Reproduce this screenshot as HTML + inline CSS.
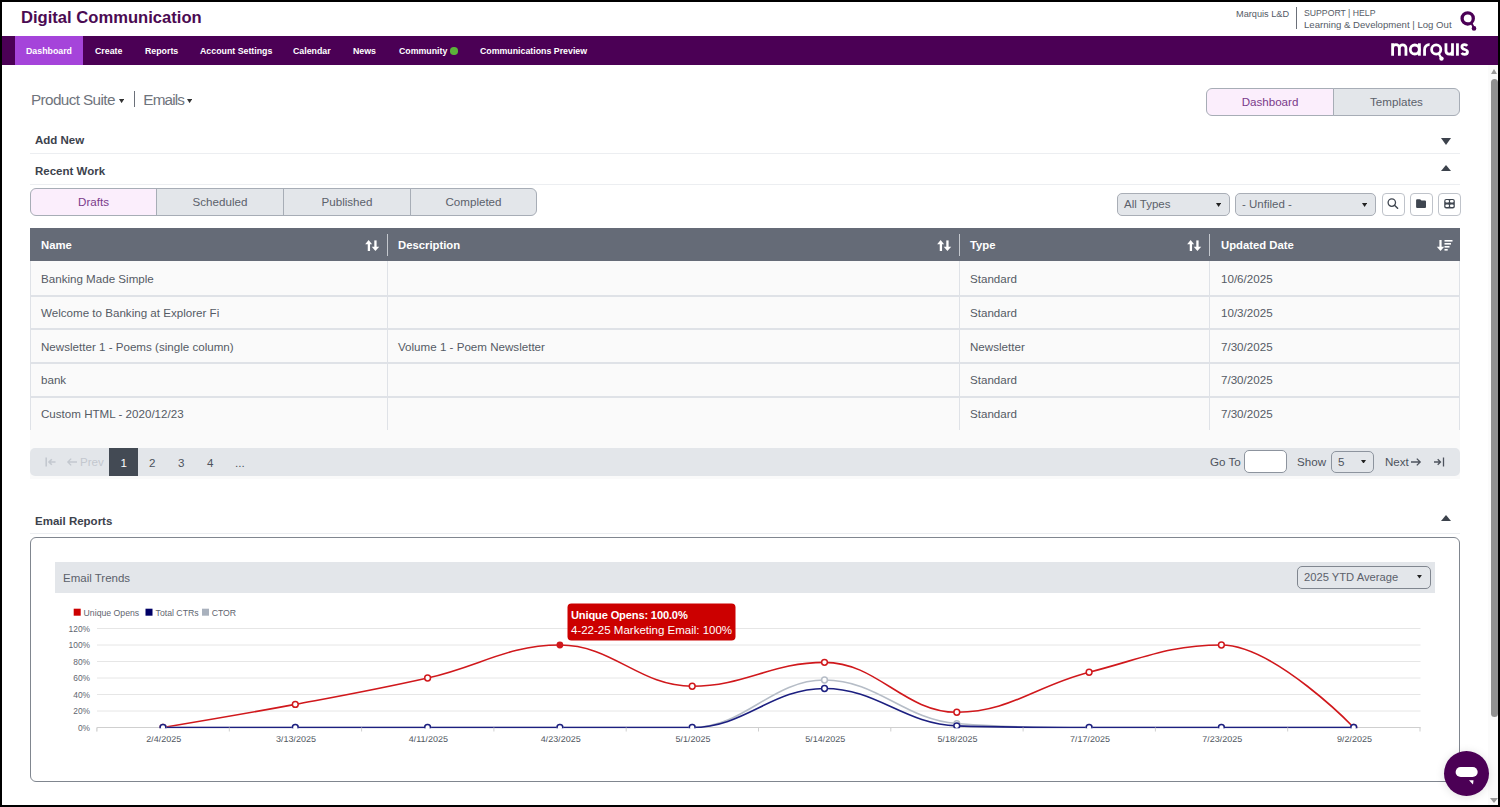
<!DOCTYPE html>
<html><head><meta charset="utf-8">
<style>
*{box-sizing:border-box;margin:0;padding:0}
html,body{width:1500px;height:807px;overflow:hidden;background:#fff}
body{font-family:"Liberation Sans",sans-serif;position:relative}
.a{position:absolute;white-space:nowrap}
.title{left:21px;top:8px;font-size:16.6px;font-weight:bold;color:#4b0a52}
.tr{font-size:9.2px;color:#555b66}
#nav{left:0;top:36px;width:1500px;height:29px;background:#4b0055}
.nv{top:0;height:29px;line-height:30.6px;font-size:8.8px;font-weight:bold;color:#fff}
.nv.act{background:#a544da}
.secttl{font-size:11.5px;font-weight:bold;color:#3c424c}
.hr{height:1px;background:#eceef1}
.tog{border:1px solid #a7adb6;height:28px;font-size:11.6px;line-height:25px;text-align:center;color:#5b616b;background:#e3e6ea}
.tog.on{background:#fbeefc;color:#7a3a8a}
.sel{border:1.8px solid #a9aeb6;border-radius:5px;background:#e3e6ea;font-size:11.5px;color:#5b616b;padding-left:6px}
.caret{position:absolute;width:0;height:0;border-left:2.6px solid transparent;border-right:2.6px solid transparent;border-top:3.6px solid #111}
.ib{border:1.8px solid #bfc3ca;border-radius:4px;background:#fff;width:23px;height:23px}
.th{top:228.8px;height:33px;line-height:33px;font-size:11.3px;font-weight:bold;color:#fff}
.tsep{top:234px;width:1px;height:22px;background:#c4c8ce}
.td{font-size:11.6px;color:#555b65;line-height:14px}
.pg{font-size:11.6px;color:#4d535d;line-height:14px}
</style></head>
<body>
  <!-- header -->
  <div class="a title">Digital Communication</div>
  <div class="a tr" style="left:1236px;top:9px">Marquis L&amp;D</div>
  <div class="a" style="left:1296px;top:7px;width:1px;height:22px;background:#6b7079"></div>
  <div class="a tr" style="left:1304px;top:8px;font-size:8.7px">SUPPORT | HELP</div>
  <div class="a tr" style="left:1304px;top:19px;font-size:9.6px">Learning &amp; Development | Log Out</div>
  <svg class="a" style="left:1456px;top:8px" width="24" height="24" viewBox="0 0 24 24"><circle cx="11.7" cy="10.4" r="5.6" fill="none" stroke="#4b0055" stroke-width="3.3"/><line x1="15.2" y1="14.6" x2="18" y2="20" stroke="#4b0055" stroke-width="2"/><circle cx="18" cy="20.4" r="2.3" fill="#4b0055"/></svg>

  <div id="nav" class="a">
    <div class="a nv act" style="left:15px;width:68px;text-align:center">Dashboard</div>
    <div class="a nv" style="left:95px">Create</div>
    <div class="a nv" style="left:145px">Reports</div>
    <div class="a nv" style="left:200px">Account Settings</div>
    <div class="a nv" style="left:293px">Calendar</div>
    <div class="a nv" style="left:353px">News</div>
    <div class="a nv" style="left:399px">Community</div>
    <div class="a" style="left:450px;top:11px;width:7.5px;height:7.5px;border-radius:50%;background:#5bb33a"></div>
    <div class="a nv" style="left:480px">Communications Preview</div>
    <svg class="a" style="left:1388px;top:2px" width="84" height="26" viewBox="1388 38 84 26"><g fill="none" stroke="#fff" stroke-width="2.8">
      <path d="M1392.6 43.3V55.7M1392.6 48.07A3.37 3.37 0 0 1 1399.35 48.07V55.7M1399.35 48.07A3.3 3.3 0 0 1 1405.95 48.07V55.7"/>
      <circle cx="1414.8" cy="49.5" r="4.5"/><path d="M1419.4 43.3V55.7"/>
      <path d="M1424.55 55.7V49.6A4.6 4.6 0 0 1 1429.6 44.7"/>
      <circle cx="1436.2" cy="49.55" r="4.6"/>
      <path d="M1445.95 43.3V51A3.28 3.28 0 0 0 1452.5 51V43.3M1452.5 50V55.7"/>
      <path d="M1457.45 43.3V55.7"/>
      <path d="M1467.2 45.9C1466.5 45 1465.5 44.7 1464.6 44.7C1463 44.7 1461.9 45.6 1461.9 47C1461.9 48.4 1463 49 1464.7 49.5C1466.5 50 1467.5 50.7 1467.5 52.1C1467.5 53.5 1466.3 54.3 1464.6 54.3C1463.4 54.3 1462.3 53.9 1461.6 53"/>
      </g><path d="M1438.8 53.8L1441.5 58.6" stroke="#fff" stroke-width="2.2"/><circle cx="1441.5" cy="58.6" r="2.2" fill="#fff"/></svg>
  </div>

  <!-- scrollbar -->
  <div class="a" style="left:1488px;top:65px;width:10px;height:740px;background:#fbfbfb"></div>
  <div class="a" style="left:1490.5px;top:69.3px;width:0;height:0;border-left:3.5px solid transparent;border-right:3.5px solid transparent;border-bottom:5px solid #9a9a9a"></div>
  <div class="a" style="left:1491px;top:79px;width:7px;height:638px;border-radius:3.5px;background:#919191"></div>
  <div class="a" style="left:1490px;top:798px;width:0;height:0;border-left:4px solid transparent;border-right:4px solid transparent;border-top:5px solid #9a9a9a"></div>

  <!-- breadcrumb -->
  <div class="a" style="left:31px;top:91px;font-size:15.3px;color:#6f747c;letter-spacing:-0.62px">Product Suite</div>
  <svg class="a" style="left:118.6px;top:98.7px" width="5.2" height="4.2" viewBox="0 0 5.2 4.2"><path d="M0 0H5.2L2.6 4.2z" fill="#333"/></svg>
  <div class="a" style="left:134px;top:90.7px;width:1px;height:16px;background:#6b7079"></div>
  <div class="a" style="left:143.3px;top:91px;font-size:15.3px;color:#6f747c;letter-spacing:-0.85px">Emails</div>
  <svg class="a" style="left:186.8px;top:98.7px" width="5.2" height="4.2" viewBox="0 0 5.2 4.2"><path d="M0 0H5.2L2.6 4.2z" fill="#333"/></svg>

  <!-- toggle -->
  <div class="a tog on" style="left:1206px;top:88px;width:128px;border-radius:6px 0 0 6px">Dashboard</div>
  <div class="a tog" style="left:1333px;top:88px;width:127px;border-radius:0 6px 6px 0">Templates</div>

  <!-- sections -->
  <div class="a secttl" style="left:35px;top:134px">Add New</div>
  <div class="a" style="left:1441px;top:137.5px;width:0;height:0;border-left:5.5px solid transparent;border-right:5.5px solid transparent;border-bottom:0;border-top:7px solid #3c424c"></div>
  <div class="a hr" style="left:30px;top:153px;width:1430px"></div>
  <div class="a secttl" style="left:35px;top:164.5px">Recent Work</div>
  <div class="a" style="left:1441px;top:165px;width:0;height:0;border-left:5.5px solid transparent;border-right:5.5px solid transparent;border-bottom:6.5px solid #3c424c"></div>
  <div class="a hr" style="left:30px;top:184px;width:1430px"></div>

  <!-- tabs -->
  <div class="a tog on" style="left:30px;top:188px;width:127px;border-radius:6px 0 0 6px">Drafts</div>
  <div class="a tog" style="left:156px;top:188px;width:128px;border-radius:0">Scheduled</div>
  <div class="a tog" style="left:283px;top:188px;width:128px;border-radius:0">Published</div>
  <div class="a tog" style="left:410px;top:188px;width:127px;border-radius:0 6px 6px 0">Completed</div>

  <!-- filters -->
  <div class="a sel" style="left:1117px;top:193px;width:113px;height:23px;line-height:21px">All Types</div>
  <svg class="a" style="left:1216px;top:202.6px" width="5.2" height="4" viewBox="0 0 5.2 4"><path d="M0 0H5.2L2.6 4z" fill="#222"/></svg>
  <div class="a sel" style="left:1235px;top:193px;width:141px;height:23px;line-height:21px">- Unfiled -</div>
  <svg class="a" style="left:1362.2px;top:202.6px" width="5.2" height="4" viewBox="0 0 5.2 4"><path d="M0 0H5.2L2.6 4z" fill="#222"/></svg>
  <div class="a ib" style="left:1382px;top:193px"></div>
  <div class="a ib" style="left:1410px;top:193px"></div>
  <div class="a ib" style="left:1438px;top:193px"></div>

  <!-- table -->
  <div class="a" style="left:30px;top:228px;width:1430px;height:33px;background:#656b77"></div>
  <div class="a th" style="left:41px">Name</div>
  <div class="a tsep" style="left:387px"></div>
  <div class="a th" style="left:398px">Description</div>
  <div class="a tsep" style="left:959px"></div>
  <div class="a th" style="left:970px">Type</div>
  <div class="a tsep" style="left:1209px"></div>
  <div class="a th" style="left:1221px">Updated Date</div>
  <div class="a" style="left:30px;top:261px;width:1430px;height:170px;background:#fafafa;border-left:1px solid #dfe2e7;border-right:1px solid #dfe2e7"></div>
  <div class="a td" style="left:41px;top:272.0px">Banking Made Simple</div>
  <div class="a td" style="left:970px;top:272.0px">Standard</div>
  <div class="a td" style="left:1221px;top:272.0px">10/6/2025</div>
  <div class="a" style="left:30px;top:295px;width:1430px;height:1.5px;background:#dfe2e7"></div>
  <div class="a td" style="left:41px;top:306.2px">Welcome to Banking at Explorer Fi</div>
  <div class="a td" style="left:970px;top:306.2px">Standard</div>
  <div class="a td" style="left:1221px;top:306.2px">10/3/2025</div>
  <div class="a" style="left:30px;top:328px;width:1430px;height:1.5px;background:#dfe2e7"></div>
  <div class="a td" style="left:41px;top:339.8px">Newsletter 1 - Poems (single column)</div>
  <div class="a td" style="left:398px;top:339.8px">Volume 1 - Poem Newsletter</div>
  <div class="a td" style="left:970px;top:339.8px">Newsletter</div>
  <div class="a td" style="left:1221px;top:339.8px">7/30/2025</div>
  <div class="a" style="left:30px;top:362px;width:1430px;height:1.5px;background:#dfe2e7"></div>
  <div class="a td" style="left:41px;top:373.2px">bank</div>
  <div class="a td" style="left:970px;top:373.2px">Standard</div>
  <div class="a td" style="left:1221px;top:373.2px">7/30/2025</div>
  <div class="a" style="left:30px;top:396px;width:1430px;height:1.5px;background:#dfe2e7"></div>
  <div class="a td" style="left:41px;top:406.8px">Custom HTML - 2020/12/23</div>
  <div class="a td" style="left:970px;top:406.8px">Standard</div>
  <div class="a td" style="left:1221px;top:406.8px">7/30/2025</div>
  <div class="a" style="left:30px;top:429.5px;width:1430px;height:1.5px;background:#dfe2e7"></div>
  <div class="a" style="left:387px;top:261px;width:1px;height:169px;background:#dfe2e7"></div>
  <div class="a" style="left:959px;top:261px;width:1px;height:169px;background:#dfe2e7"></div>
  <div class="a" style="left:1209px;top:261px;width:1px;height:169px;background:#dfe2e7"></div>
    <!-- sort icons -->
  <svg class="a" style="left:363px;top:238px" width="18" height="15" viewBox="0 0 18 15"><g fill="#fff"><path d="M2.2 6.3L5.65 1.9L9.1 6.3z"/><rect x="4.75" y="5" width="2.3" height="8"/><rect x="11.3" y="2.4" width="2.3" height="8"/><path d="M8.7 8.7L12.45 13L16.2 8.7z"/></g></svg>
  <svg class="a" style="left:935px;top:238px" width="18" height="15" viewBox="0 0 18 15"><g fill="#fff"><path d="M2.2 6.3L5.65 1.9L9.1 6.3z"/><rect x="4.75" y="5" width="2.3" height="8"/><rect x="11.3" y="2.4" width="2.3" height="8"/><path d="M8.7 8.7L12.45 13L16.2 8.7z"/></g></svg>
  <svg class="a" style="left:1185px;top:238px" width="18" height="15" viewBox="0 0 18 15"><g fill="#fff"><path d="M2.2 6.3L5.65 1.9L9.1 6.3z"/><rect x="4.75" y="5" width="2.3" height="8"/><rect x="11.3" y="2.4" width="2.3" height="8"/><path d="M8.7 8.7L12.45 13L16.2 8.7z"/></g></svg>
  <svg class="a" style="left:1435px;top:238px" width="20" height="15" viewBox="0 0 20 15"><g fill="#fff"><rect x="4.4" y="2" width="2.2" height="8"/><path d="M1.8 8.7L5.5 13L9.2 8.7z"/></g><g fill="#fff"><rect x="9.5" y="2" width="8" height="1.6"/><rect x="9.5" y="5" width="6.5" height="1.6"/><rect x="9.5" y="8" width="5" height="1.6"/><rect x="9.5" y="11" width="3.2" height="1.6"/></g></svg>

  <!-- filter icon contents -->
  <svg class="a" style="left:1382px;top:193px" width="23" height="23" viewBox="1382 193 23 23"><circle cx="1391.8" cy="202.6" r="3.7" fill="none" stroke="#3f4650" stroke-width="1.3"/><line x1="1394.5" y1="205.3" x2="1397.6" y2="208.2" stroke="#3f4650" stroke-width="1.5" stroke-linecap="round"/></svg>
  <svg class="a" style="left:1410px;top:193px" width="23" height="23" viewBox="1410 193 23 23"><path d="M1417.1 199.2h2.6q0.7 0 1.1 0.5l0.6 0.7h3.6q1 0 1 1v5.7q0 1-1 1h-7.9q-1 0-1-1v-6.9q0-1 1-1z" fill="#3f4650"/></svg>
  <svg class="a" style="left:1438px;top:193px" width="23" height="23" viewBox="1438 193 23 23"><rect x="1444.2" y="198.9" width="10.6" height="9.5" rx="2" fill="#3f4650"/><g fill="#fff"><rect x="1445.4" y="200.1" width="3.6" height="2.5" rx="1"/><rect x="1450" y="200.1" width="3.6" height="2.5" rx="1"/><rect x="1445.4" y="204.6" width="3.6" height="2.5" rx="1"/><rect x="1450" y="204.6" width="3.6" height="2.5" rx="1"/></g></svg>

  <!-- pagination -->
  <div class="a" style="left:30px;top:430px;width:1430px;height:49px;background:#fafafa"></div>
  <div class="a" style="left:30px;top:448px;width:1430px;height:28px;background:#e3e6ea;border-radius:5px"></div>
  <div class="a" style="left:109px;top:448px;width:29px;height:28px;background:#434a54"></div>
  <svg class="a" style="left:44px;top:456px" width="12" height="12" viewBox="0 0 12 12"><g fill="none" stroke="#c3c8cf" stroke-width="1.6"><path d="M2.2 1.5V10.5"/><path d="M11.5 6H5M7.8 3.2L5 6L7.8 8.8"/></g></svg>
  <svg class="a" style="left:66px;top:456px" width="12" height="12" viewBox="0 0 12 12"><g fill="none" stroke="#c3c8cf" stroke-width="1.3"><path d="M11 6H2M5.2 2.6L1.8 6L5.2 9.4"/></g></svg>
  <div class="a pg" style="left:80px;top:455px;color:#c3c8cf">Prev</div>
  <div class="a pg" style="left:120.5px;top:455.5px;color:#fff">1</div>
  <div class="a pg" style="left:149px;top:455.5px">2</div>
  <div class="a pg" style="left:178px;top:455.5px">3</div>
  <div class="a pg" style="left:207px;top:455.5px">4</div>
  <div class="a pg" style="left:235px;top:455.5px">...</div>
  <div class="a pg" style="left:1210px;top:455px">Go To</div>
  <div class="a" style="left:1244px;top:450px;width:43px;height:23px;background:#fff;border:1px solid #8d949e;border-radius:5px"></div>
  <div class="a pg" style="left:1297px;top:455px">Show</div>
  <div class="a" style="left:1331px;top:451px;width:43px;height:22px;background:#e3e6ea;border:1px solid #8d949e;border-radius:5px"></div>
  <div class="a pg" style="left:1338px;top:455px">5</div>
  <svg class="a" style="left:1360.5px;top:459.5px" width="5" height="3.6" viewBox="0 0 5 3.6"><path d="M0 0H5L2.5 3.6z" fill="#222"/></svg>
  <div class="a pg" style="left:1385px;top:455px">Next</div>
  <svg class="a" style="left:1410px;top:456px" width="12" height="12" viewBox="0 0 12 12"><g fill="none" stroke="#4d535d" stroke-width="1.3"><path d="M1 6H10M6.8 2.6L10.2 6L6.8 9.4"/></g></svg>
  <svg class="a" style="left:1433px;top:456px" width="12" height="12" viewBox="0 0 12 12"><g fill="none" stroke="#4d535d" stroke-width="1.3"><path d="M10.5 1.5V10.5"/><path d="M1 6H7.5M4.7 3.2L7.5 6L4.7 8.8"/></g></svg>

  <!-- email reports -->
  <div class="a secttl" style="left:35px;top:514.5px">Email Reports</div>
  <div class="a" style="left:1441px;top:515px;width:0;height:0;border-left:5.5px solid transparent;border-right:5.5px solid transparent;border-bottom:6.5px solid #3c424c"></div>
  <div class="a hr" style="left:30px;top:533px;width:1430px"></div>
  <div class="a" style="left:30px;top:537px;width:1430px;height:245px;border:1.5px solid #80868f;border-radius:6px"></div>
  <div class="a" style="left:55px;top:562px;width:1380px;height:31px;background:#e3e6ea"></div>
  <div class="a" style="left:63px;top:571.5px;font-size:11.5px;color:#5b616b">Email Trends</div>
  <div class="a sel" style="left:1297px;top:566px;width:134px;height:23px;line-height:20px;font-size:11.2px;border:1.5px solid #80868f">2025 YTD Average</div>
  <svg class="a" style="left:1416.8px;top:575.2px" width="4.9" height="3.5" viewBox="0 0 4.9 3.5"><path d="M0 0H4.9L2.45 3.5z" fill="#222"/></svg>
  <!--CHART-->
  <svg class="a" style="left:0;top:0" width="1500" height="807" viewBox="0 0 1500 807" font-family="Liberation Sans, sans-serif">
  <line x1="97" y1="711.00" x2="1420.5" y2="711.00" stroke="#e6e6e6" stroke-width="1"/>
  <line x1="97" y1="694.50" x2="1420.5" y2="694.50" stroke="#e6e6e6" stroke-width="1"/>
  <line x1="97" y1="678.00" x2="1420.5" y2="678.00" stroke="#e6e6e6" stroke-width="1"/>
  <line x1="97" y1="661.50" x2="1420.5" y2="661.50" stroke="#e6e6e6" stroke-width="1"/>
  <line x1="97" y1="645.00" x2="1420.5" y2="645.00" stroke="#e6e6e6" stroke-width="1"/>
  <line x1="97" y1="628.50" x2="1420.5" y2="628.50" stroke="#e6e6e6" stroke-width="1"/>
  <line x1="97" y1="727.50" x2="1420.5" y2="727.50" stroke="#cfcfcf" stroke-width="1.2"/>
  <line x1="97.00" y1="727.50" x2="97.00" y2="731.50" stroke="#cfcfcf" stroke-width="1"/>
  <line x1="229.30" y1="727.50" x2="229.30" y2="731.50" stroke="#cfcfcf" stroke-width="1"/>
  <line x1="361.60" y1="727.50" x2="361.60" y2="731.50" stroke="#cfcfcf" stroke-width="1"/>
  <line x1="493.90" y1="727.50" x2="493.90" y2="731.50" stroke="#cfcfcf" stroke-width="1"/>
  <line x1="626.20" y1="727.50" x2="626.20" y2="731.50" stroke="#cfcfcf" stroke-width="1"/>
  <line x1="758.50" y1="727.50" x2="758.50" y2="731.50" stroke="#cfcfcf" stroke-width="1"/>
  <line x1="890.80" y1="727.50" x2="890.80" y2="731.50" stroke="#cfcfcf" stroke-width="1"/>
  <line x1="1023.10" y1="727.50" x2="1023.10" y2="731.50" stroke="#cfcfcf" stroke-width="1"/>
  <line x1="1155.40" y1="727.50" x2="1155.40" y2="731.50" stroke="#cfcfcf" stroke-width="1"/>
  <line x1="1287.70" y1="727.50" x2="1287.70" y2="731.50" stroke="#cfcfcf" stroke-width="1"/>
  <line x1="1420.00" y1="727.50" x2="1420.00" y2="731.50" stroke="#cfcfcf" stroke-width="1"/>
  <text x="90" y="730.50" font-size="8.4" fill="#5f6670" text-anchor="end">0%</text>
  <text x="90" y="714.00" font-size="8.4" fill="#5f6670" text-anchor="end">20%</text>
  <text x="90" y="697.50" font-size="8.4" fill="#5f6670" text-anchor="end">40%</text>
  <text x="90" y="681.00" font-size="8.4" fill="#5f6670" text-anchor="end">60%</text>
  <text x="90" y="664.50" font-size="8.4" fill="#5f6670" text-anchor="end">80%</text>
  <text x="90" y="648.00" font-size="8.4" fill="#5f6670" text-anchor="end">100%</text>
  <text x="90" y="631.50" font-size="8.4" fill="#5f6670" text-anchor="end">120%</text>
  <text x="163.80" y="741.60" font-size="9" fill="#4f5660" text-anchor="middle">2/4/2025</text>
  <text x="296.10" y="741.60" font-size="9" fill="#4f5660" text-anchor="middle">3/13/2025</text>
  <text x="428.40" y="741.60" font-size="9" fill="#4f5660" text-anchor="middle">4/11/2025</text>
  <text x="560.70" y="741.60" font-size="9" fill="#4f5660" text-anchor="middle">4/23/2025</text>
  <text x="693.00" y="741.60" font-size="9" fill="#4f5660" text-anchor="middle">5/1/2025</text>
  <text x="825.30" y="741.60" font-size="9" fill="#4f5660" text-anchor="middle">5/14/2025</text>
  <text x="957.60" y="741.60" font-size="9" fill="#4f5660" text-anchor="middle">5/18/2025</text>
  <text x="1089.90" y="741.60" font-size="9" fill="#4f5660" text-anchor="middle">7/17/2025</text>
  <text x="1222.20" y="741.60" font-size="9" fill="#4f5660" text-anchor="middle">7/23/2025</text>
  <text x="1354.50" y="741.60" font-size="9" fill="#4f5660" text-anchor="middle">9/2/2025</text>
  <rect x="73.7" y="608.7" width="7" height="7" fill="#cc0000"/>
  <text x="83.6" y="615.8" font-size="8.7" fill="#5f6670">Unique Opens</text>
  <rect x="145.5" y="608.7" width="7" height="7" fill="#000066"/>
  <text x="155.6" y="615.8" font-size="8.7" fill="#5f6670">Total CTRs</text>
  <rect x="202" y="608.7" width="7" height="7" fill="#a9b1bd"/>
  <text x="211.7" y="615.8" font-size="8.7" fill="#5f6670">CTOR</text>
  <path d="M163.00 727.50 C163.00 727.50 242.38 714.30 295.30 704.40 C348.22 694.50 374.68 689.88 427.60 678.00 C480.52 666.12 506.98 645.00 559.90 645.00 C612.82 645.00 639.28 686.25 692.20 686.25 C745.12 686.25 771.58 662.33 824.50 662.33 C877.42 662.33 903.88 712.24 956.80 712.24 C1009.72 712.24 1036.18 685.67 1089.10 672.23 C1142.02 658.78 1168.48 645.00 1221.40 645.00 C1274.32 645.00 1353.70 727.50 1353.70 727.50" fill="none" stroke="#d0181c" stroke-width="1.6" stroke-linejoin="round" stroke-linecap="round"/>
  <path d="M163.00 727.50 C163.00 727.50 242.38 727.50 295.30 727.50 C348.22 727.50 374.68 727.50 427.60 727.50 C480.52 727.50 506.98 727.50 559.90 727.50 C612.82 727.50 639.28 727.50 692.20 727.50 C745.12 727.50 771.58 679.98 824.50 679.98 C877.42 679.98 903.88 719.58 956.80 723.54 C1009.72 727.50 1036.18 727.50 1089.10 727.50 C1142.02 727.50 1168.48 727.50 1221.40 727.50 C1274.32 727.50 1353.70 727.50 1353.70 727.50" fill="none" stroke="#b6bdc7" stroke-width="1.6" stroke-linejoin="round" stroke-linecap="round"/>
  <path d="M163.00 727.50 C163.00 727.50 242.38 727.50 295.30 727.50 C348.22 727.50 374.68 727.50 427.60 727.50 C480.52 727.50 506.98 727.50 559.90 727.50 C612.82 727.50 639.28 727.50 692.20 727.50 C745.12 727.50 771.58 688.48 824.50 688.48 C877.42 688.48 903.88 724.20 956.80 725.85 C1009.72 727.50 1036.18 727.50 1089.10 727.50 C1142.02 727.50 1168.48 727.50 1221.40 727.50 C1274.32 727.50 1353.70 727.50 1353.70 727.50" fill="none" stroke="#1c1f80" stroke-width="1.6" stroke-linejoin="round" stroke-linecap="round"/>
  <circle cx="163.00" cy="727.50" r="2.9" fill="#fff" stroke="#d0181c" stroke-width="1.5"/>
  <circle cx="295.30" cy="704.40" r="2.9" fill="#fff" stroke="#d0181c" stroke-width="1.5"/>
  <circle cx="427.60" cy="678.00" r="2.9" fill="#fff" stroke="#d0181c" stroke-width="1.5"/>
  <circle cx="559.90" cy="645.00" r="3.4" fill="#d0181c"/>
  <circle cx="692.20" cy="686.25" r="2.9" fill="#fff" stroke="#d0181c" stroke-width="1.5"/>
  <circle cx="824.50" cy="662.33" r="2.9" fill="#fff" stroke="#d0181c" stroke-width="1.5"/>
  <circle cx="956.80" cy="712.24" r="2.9" fill="#fff" stroke="#d0181c" stroke-width="1.5"/>
  <circle cx="1089.10" cy="672.23" r="2.9" fill="#fff" stroke="#d0181c" stroke-width="1.5"/>
  <circle cx="1221.40" cy="645.00" r="2.9" fill="#fff" stroke="#d0181c" stroke-width="1.5"/>
  <circle cx="1353.70" cy="727.50" r="2.9" fill="#fff" stroke="#d0181c" stroke-width="1.5"/>
  <circle cx="163.00" cy="727.50" r="2.9" fill="#fff" stroke="#b6bdc7" stroke-width="1.5"/>
  <circle cx="295.30" cy="727.50" r="2.9" fill="#fff" stroke="#b6bdc7" stroke-width="1.5"/>
  <circle cx="427.60" cy="727.50" r="2.9" fill="#fff" stroke="#b6bdc7" stroke-width="1.5"/>
  <circle cx="559.90" cy="727.50" r="2.9" fill="#fff" stroke="#b6bdc7" stroke-width="1.5"/>
  <circle cx="692.20" cy="727.50" r="2.9" fill="#fff" stroke="#b6bdc7" stroke-width="1.5"/>
  <circle cx="824.50" cy="679.98" r="2.9" fill="#fff" stroke="#b6bdc7" stroke-width="1.5"/>
  <circle cx="956.80" cy="723.54" r="2.9" fill="#fff" stroke="#b6bdc7" stroke-width="1.5"/>
  <circle cx="1089.10" cy="727.50" r="2.9" fill="#fff" stroke="#b6bdc7" stroke-width="1.5"/>
  <circle cx="1221.40" cy="727.50" r="2.9" fill="#fff" stroke="#b6bdc7" stroke-width="1.5"/>
  <circle cx="1353.70" cy="727.50" r="2.9" fill="#fff" stroke="#b6bdc7" stroke-width="1.5"/>
  <circle cx="163.00" cy="727.50" r="2.9" fill="#fff" stroke="#1c1f80" stroke-width="1.5"/>
  <circle cx="295.30" cy="727.50" r="2.9" fill="#fff" stroke="#1c1f80" stroke-width="1.5"/>
  <circle cx="427.60" cy="727.50" r="2.9" fill="#fff" stroke="#1c1f80" stroke-width="1.5"/>
  <circle cx="559.90" cy="727.50" r="2.9" fill="#fff" stroke="#1c1f80" stroke-width="1.5"/>
  <circle cx="692.20" cy="727.50" r="2.9" fill="#fff" stroke="#1c1f80" stroke-width="1.5"/>
  <circle cx="824.50" cy="688.48" r="2.9" fill="#fff" stroke="#1c1f80" stroke-width="1.5"/>
  <circle cx="956.80" cy="725.85" r="2.9" fill="#fff" stroke="#1c1f80" stroke-width="1.5"/>
  <circle cx="1089.10" cy="727.50" r="2.9" fill="#fff" stroke="#1c1f80" stroke-width="1.5"/>
  <circle cx="1221.40" cy="727.50" r="2.9" fill="#fff" stroke="#1c1f80" stroke-width="1.5"/>
  <circle cx="1353.70" cy="727.50" r="2.9" fill="#fff" stroke="#1c1f80" stroke-width="1.5"/>
  <rect x="97" y="728.3" width="1324" height="8" fill="#fff"/>
  <line x1="97.00" y1="727.50" x2="97.00" y2="731.50" stroke="#cfcfcf" stroke-width="1"/>
  <line x1="229.30" y1="727.50" x2="229.30" y2="731.50" stroke="#cfcfcf" stroke-width="1"/>
  <line x1="361.60" y1="727.50" x2="361.60" y2="731.50" stroke="#cfcfcf" stroke-width="1"/>
  <line x1="493.90" y1="727.50" x2="493.90" y2="731.50" stroke="#cfcfcf" stroke-width="1"/>
  <line x1="626.20" y1="727.50" x2="626.20" y2="731.50" stroke="#cfcfcf" stroke-width="1"/>
  <line x1="758.50" y1="727.50" x2="758.50" y2="731.50" stroke="#cfcfcf" stroke-width="1"/>
  <line x1="890.80" y1="727.50" x2="890.80" y2="731.50" stroke="#cfcfcf" stroke-width="1"/>
  <line x1="1023.10" y1="727.50" x2="1023.10" y2="731.50" stroke="#cfcfcf" stroke-width="1"/>
  <line x1="1155.40" y1="727.50" x2="1155.40" y2="731.50" stroke="#cfcfcf" stroke-width="1"/>
  <line x1="1287.70" y1="727.50" x2="1287.70" y2="731.50" stroke="#cfcfcf" stroke-width="1"/>
  <line x1="1420.00" y1="727.50" x2="1420.00" y2="731.50" stroke="#cfcfcf" stroke-width="1"/>
  <rect x="567.5" y="603.5" width="168" height="37" rx="4" fill="#cc0000"/>
  <text x="571" y="618.5" font-size="11.1" font-weight="bold" letter-spacing="-0.15" fill="#fff">Unique Opens: 100.0%</text>
  <text x="571" y="634" font-size="11.5" fill="#fff">4-22-25 Marketing Email: 100%</text>
  </svg>
  <!--ENDCHART-->

  <!-- chat button -->
  <div class="a" style="left:1444px;top:751px;width:45.4px;height:45.4px;border-radius:50%;background:#4b0055;box-shadow:0 1px 10px rgba(0,0,0,0.12)"></div>
  <svg class="a" style="left:1444px;top:751px" width="46" height="46" viewBox="1444 751 46 46"><rect x="1455.6" y="766.9" width="22.1" height="10.2" rx="5.1" fill="#fff"/><path d="M1469 780.3H1473.5L1473 784.4z" fill="#fff"/></svg>

  <!-- frame -->
  <div class="a" style="left:0;top:0;width:1500px;height:2px;background:#000"></div>
  <div class="a" style="left:0;top:805px;width:1500px;height:2px;background:#000"></div>
  <div class="a" style="left:0;top:0;width:2px;height:807px;background:#000"></div>
  <div class="a" style="left:1498px;top:0;width:2px;height:807px;background:#000"></div>

</body></html>
